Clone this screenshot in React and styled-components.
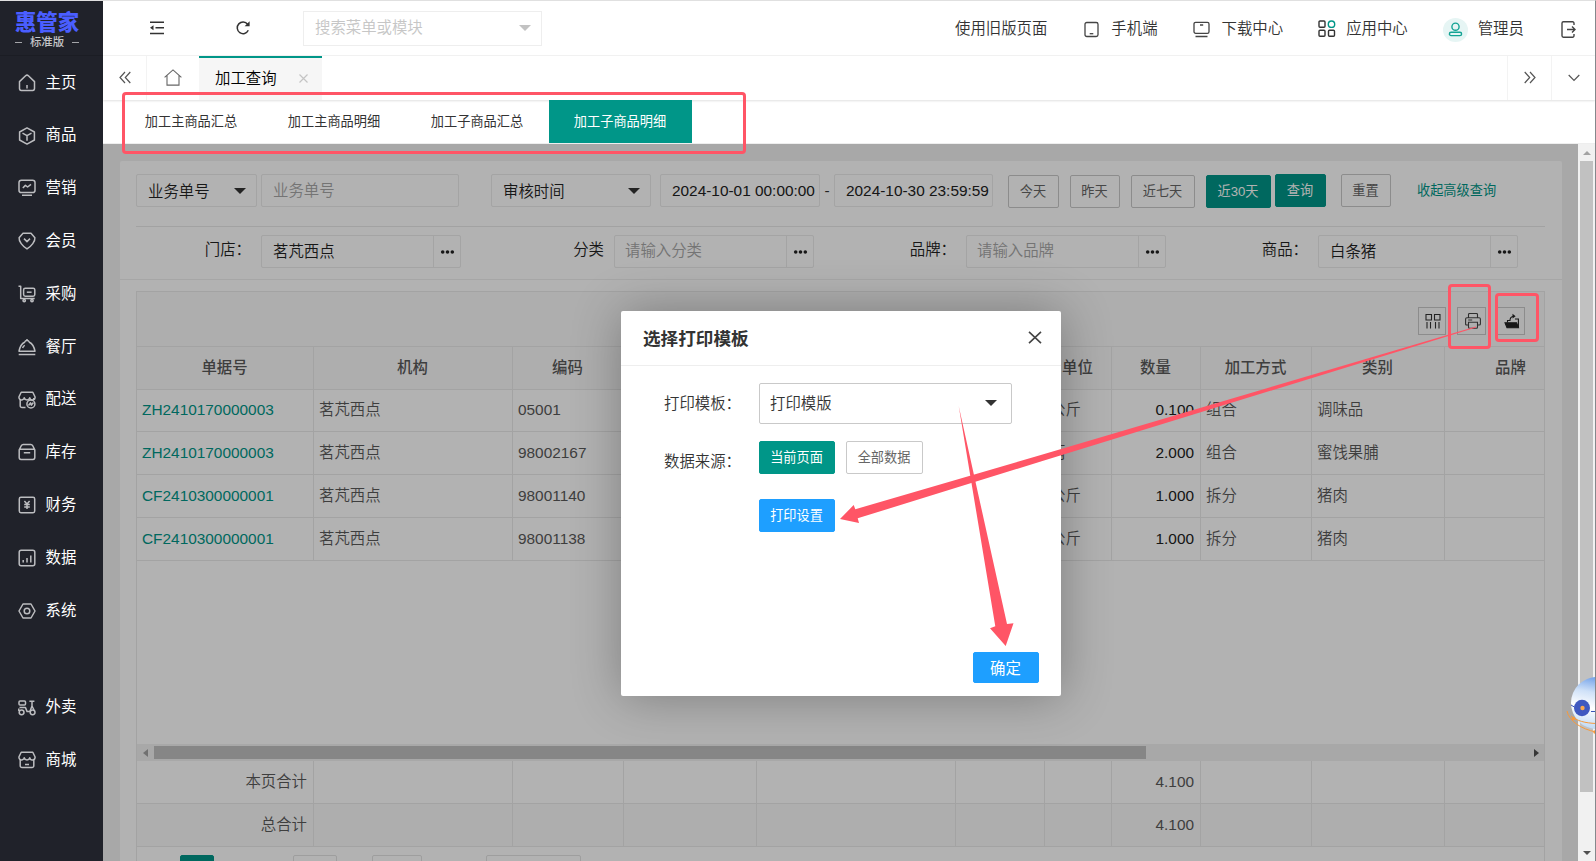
import React from 'react';
import styled, { createGlobalStyle } from 'styled-components';

const GlobalStyle = createGlobalStyle`
  * {
    box-sizing: border-box;
  }
  body {
    margin: 0;
    background: #fff;
    color: #333;
    font-family: "Liberation Sans", "Noto Sans CJK SC", sans-serif;
    font-size: 15.4px;
    font-weight: 350;
    line-height: 1.4;
  }
`;

const Window = styled.div`
  position: relative;
  display: flex;
  width: 1596px;
  height: 861px;
  overflow: hidden;
  border-top: 1px solid #e0e0e0;
  border-right: 1px solid #85888c;
`;

/* sidebar */
const Sidebar = styled.aside`
  width: 103px;
  flex: none;
  background: #20222a;
  color: #fff;
`;
const Logo = styled.div`
  height: 55px;
  padding: 10px 9px 0 0;
  display: flex;
  flex-direction: column;
  align-items: center;
  border-bottom: 1px solid #1b1d24;
`;
const LogoName = styled.div`
  color: #4a5eff;
  font-size: 21.4px;
  font-weight: 900;
  line-height: 24px;
`;
const LogoEdition = styled.div`
  display: flex;
  align-items: center;
  gap: 8px;
  color: #c4c5c8;
  font-size: 11.4px;
  font-weight: 500;
  line-height: 15px;
  &::before,
  &::after {
    content: '';
    width: 7px;
    height: 1px;
    background: #a4a5a9;
  }
`;
const SideItem = styled.div`
  display: flex;
  align-items: center;
  gap: 9.5px;
  height: 52.8px;
  padding-left: 18px;
  margin-top: ${(p) => (p.$apart ? '44px' : 0)};
  font-weight: 400;
  svg {
    flex: none;
    margin-top: 1px;
  }
`;

/* top bar */
const Main = styled.main`
  width: 1492px;
  flex: none;
  display: flex;
  flex-direction: column;
`;
const Header = styled.header`
  display: flex;
  align-items: center;
  height: 55px;
  border-bottom: 1px solid #f3f3f3;
  padding-left: 46px;
  svg {
    flex: none;
  }
`;
const HeaderIcon = styled.div`
  width: 86px;
  height: 20px;
  display: flex;
  align-items: center;
`;
const Search = styled.div`
  display: flex;
  align-items: center;
  justify-content: space-between;
  width: 239px;
  height: 35px;
  margin: 1px 0 0 -18px;
  padding: 0 10px 1px 11px;
  border: 1px solid #eee;
  color: #c6c6c6;
`;
const HeaderLink = styled.div`
  display: flex;
  align-items: center;
  gap: ${(p) => p.$gap || 0}px;
  margin-left: ${(p) => p.$left}px;
  padding-top: 2px;
  white-space: nowrap;
  svg {
    margin-top: -1px;
  }
`;
const Avatar = styled.div`
  display: flex;
  align-items: center;
  justify-content: center;
  width: 25px;
  height: 24px;
  margin-top: 1px;
  border-radius: 50%;
  background: #e6f5f4;
`;
const Caret = styled.i`
  flex: none;
  border: 6px solid transparent;
  border-top-color: ${(p) => p.$color || '#333'};
  border-bottom-width: 0;
`;

/* page tabs */
const TabBar = styled.div`
  display: flex;
  height: 44px;
  box-shadow: 0 1px 2px rgba(0, 0, 0, 0.12);
`;
const TabControl = styled.div`
  display: flex;
  align-items: center;
  justify-content: center;
  width: ${(p) => p.$width}px;
  padding-bottom: 1px;
  border-left: ${(p) => (p.$line ? '1px solid #f3f3f3' : 'none')};
  margin-left: ${(p) => (p.$end ? 'auto' : 0)};
`;
const PageTab = styled.div`
  display: flex;
  align-items: center;
  justify-content: space-between;
  width: 123px;
  padding: 0 14px 1px 16px;
  border-top: 2px solid #009688;
  background: #f6f6f6;
  color: #000;
`;

const SubTabs = styled.nav`
  display: flex;
  height: 44px;
  flex: none;
  padding-left: 17px;
  border-bottom: 1px solid #eee;
`;
const SubTab = styled.div`
  width: 143px;
  height: 43px;
  padding-right: 1px;
  line-height: 43px;
  text-align: center;
  font-size: 13.2px;
  font-weight: 400;
  color: ${(p) => (p.$active ? '#fff' : '#333')};
  background: ${(p) => (p.$active ? '#009688' : 'none')};
`;

/* content */
const Page = styled.div`
  position: relative;
  display: flex;
  height: 717px;
  flex: none;
  overflow: hidden;
  background: #f1f1f1;
`;
const Shade = styled.div`
  position: absolute;
  inset: 0 17px 0 0;
  background: rgba(0, 0, 0, 0.3);
`;
const Card = styled.section`
  width: 1442px;
  height: 760px;
  flex: none;
  margin: 17px 16px 0 17px;
  border-radius: 2px;
  background: #fff;
`;
const SearchRow = styled.div`
  display: flex;
  align-items: flex-start;
  height: 66px;
  margin: 0 17px 0 16px;
  padding-top: 13px;
  border-bottom: 1px solid #e8e8e8;
`;
const Field = styled.div`
  display: flex;
  align-items: center;
  justify-content: space-between;
  width: ${(p) => p.$width}px;
  height: 33px;
  margin-left: ${(p) => p.$left || 0}px;
  padding: ${(p) => (p.$select ? '2px 10px 0 11px' : '1px 0 0 11px')};
  border: 1px solid #ebebeb;
  border-radius: 2px;
  color: ${(p) => (p.$muted ? '#a6a6a6' : '#222')};
  white-space: nowrap;
  ${Caret} {
    margin-bottom: 2px;
  }
`;
const Dash = styled.span`
  width: 14px;
  line-height: 33px;
  text-align: center;
`;
const Button = styled.button`
  height: ${(p) => p.$height || 33}px;
  width: ${(p) => p.$width}px;
  margin: ${(p) => p.$top || 0}px 0 0 ${(p) => p.$left || 0}px;
  padding: 2px 1px 0 0;
  border: 1px solid ${(p) => p.$fill || '#c9c9c9'};
  border-radius: 2px;
  background: ${(p) => p.$fill || '#fff'};
  color: ${(p) => (p.$fill ? '#fff' : '#666')};
  font: inherit;
  font-size: ${(p) => p.$size || 13.2}px;
  font-weight: 400;
  white-space: nowrap;
`;
const FoldLink = styled.a`
  margin-left: 26px;
  line-height: 33px;
  font-size: 13.2px;
  font-weight: 400;
  color: #009688;
`;
const FilterRow = styled.div`
  display: grid;
  grid-template-columns: 125px 200px 153px 200px 152px 200px 152px 200px;
  height: 53px;
  padding: 8px 0 0 16px;
  border-bottom: 1px solid #eee;
`;
const FilterLabel = styled.div`
  padding-right: 10px;
  text-align: right;
  line-height: 30px;
  color: #222;
`;
const Picker = styled.div`
  display: flex;
  height: 33px;
  border: 1px solid #ebebeb;
  border-radius: 2px;
`;
const PickerValue = styled.div`
  width: 171px;
  padding-left: ${(p) => (p.$muted ? 10 : 11)}px;
  line-height: ${(p) => (p.$muted ? 30 : 32)}px;
  color: ${(p) => (p.$muted ? '#a6a6a6' : '#222')};
`;
const PickerMore = styled.div`
  flex: 1;
  display: flex;
  align-items: center;
  justify-content: center;
  padding-top: 1px;
  border-left: 1px solid #ebebeb;
`;

/* table */
const TableBox = styled.div`
  width: 1409px;
  height: 600px;
  margin: 11px 0 0 16px;
  border: 1px solid #eaeaea;
  overflow: hidden;
`;
const Tools = styled.div`
  display: flex;
  justify-content: flex-end;
  height: 55px;
  padding: 15px 19px 0 0;
  border-bottom: 1px solid #eaeaea;
  background: #fafafa;
`;
const Tool = styled.div`
  display: flex;
  align-items: center;
  justify-content: center;
  width: ${(p) => p.$width || 28}px;
  height: 28px;
  margin-left: 11px;
  padding: 0 0 1px 2px;
  border: 1px solid #c9c9c9;
`;
const Row = styled.div`
  display: grid;
  grid-template-columns: 177px 199px 111px 133px 199px 89px 67px 89px 111px 133px 133px;
  height: 43px;
  background: ${(p) => (p.$tinted ? '#fafafa' : '#fff')};
  color: #5a5a5a;
`;
const Cell = styled.div`
  padding: ${(p) => (p.$head ? '0 6px 1px 5px' : '0 6px 1px 5px')};
  border-right: 1px solid #eaeaea;
  border-bottom: 1px solid #eaeaea;
  display: flex;
  align-items: center;
  justify-content: ${(p) => p.$align || 'flex-start'};
  font-weight: ${(p) => (p.$head ? 500 : 'inherit')};
  color: ${(p) => p.$color || 'inherit'};
  white-space: nowrap;
`;
const TableBody = styled.div`
  height: 354px;
  ${Row}:first-child {
    height: 42px;
  }
`;
const HScroll = styled.div`
  display: flex;
  align-items: center;
  justify-content: space-between;
  height: 17px;
  padding: 0 5px 0 6px;
  background: #f1f1f1;
`;
const HThumb = styled.div`
  width: 992px;
  height: 13px;
  margin: 0 auto 0 6px;
  background: #c1c1c1;
`;
const SideArrow = styled.i`
  border: 4px solid transparent;
  border-${(p) => p.$to}-width: 0;
  border-${(p) => (p.$to === 'left' ? 'right' : 'left')}: 5px solid
    ${(p) => (p.$to === 'left' ? '#a3a3a3' : '#505050')};
`;
const Pager = styled.div`
  display: flex;
  padding: 8px 0 0 43px;
`;
const PagerBox = styled.div`
  width: ${(p) => p.$width}px;
  height: 30px;
  margin-right: ${(p) => p.$right || 0}px;
  border: 1px solid ${(p) => p.$fill || '#e2e2e2'};
  border-radius: 2px;
  background: ${(p) => p.$fill || '#fff'};
`;
const VScroll = styled.div`
  display: flex;
  flex-direction: column;
  align-items: center;
  width: 17px;
  flex: none;
  padding: 7px 0 6px;
  background: #f1f1f1;
`;
const VArrow = styled.i`
  border: 4px solid transparent;
  border-${(p) => p.$to}-width: 0;
  border-${(p) => (p.$to === 'top' ? 'bottom' : 'top')}: 4px solid
    ${(p) => (p.$to === 'top' ? '#a3a3a3' : '#505050')};
`;
const VThumb = styled.div`
  width: 13px;
  height: 631px;
  margin: 6px 0 auto;
  background: #c1c1c1;
`;

/* print dialog */
const Dialog = styled.div`
  position: absolute;
  left: 621px;
  top: 310px;
  width: 440px;
  height: 385px;
  display: flex;
  flex-direction: column;
  border-radius: 2px;
  background: #fff;
  box-shadow: 1px 1px 50px rgba(0, 0, 0, 0.3);
`;
const DialogTitle = styled.div`
  display: flex;
  align-items: center;
  justify-content: space-between;
  height: 55px;
  padding: 2px 19px 0 22px;
  border-bottom: 1px solid #eee;
  font-size: 17.6px;
  font-weight: 700;
  svg {
    margin-bottom: 4px;
  }
`;
const FormLine = styled.div`
  display: flex;
  align-items: flex-start;
  height: ${(p) => p.$height}px;
  margin-top: ${(p) => p.$top || 0}px;
  padding-left: 43px;
`;
const FormLabel = styled.div`
  width: 95px;
  line-height: 41px;
`;
const TemplateSelect = styled.div`
  display: flex;
  align-items: center;
  justify-content: space-between;
  width: 253px;
  height: 41px;
  padding: 1px 14px 0 10px;
  border: 1px solid #c9c9c9;
  border-radius: 2px;
  ${Caret} {
    margin-bottom: 2px;
  }
`;
const DialogFooter = styled.div`
  display: flex;
  justify-content: flex-end;
  margin-top: auto;
  padding: 0 22px 13px 0;
`;

/* notes drawn over the page */
const Mark = styled.div`
  position: absolute;
  left: ${(p) => p.$x}px;
  top: ${(p) => p.$y}px;
  width: ${(p) => p.$w}px;
  height: ${(p) => p.$h}px;
  border: 3px solid #ff5566;
  border-radius: 4px;
`;
const Overlay = styled.svg`
  position: absolute;
  left: 0;
  top: -1px;
  pointer-events: none;
`;

const sideIcons = {
  home: (
    <>
      <path d="M1.5 7.6 7.6 1.8a2 2 0 0 1 2.8 0l6.1 5.8v7a1.8 1.8 0 0 1-1.8 1.8H3.3a1.8 1.8 0 0 1-1.8-1.8z" />
      <path d="M9 11v3.5" />
    </>
  ),
  goods: (
    <>
      <path d="M9 .9 16.4 5v8L9 17.1 1.6 13V5z" />
      <path d="M4.5 6.2 9 8.7l4.5-2.5M9 8.7v5" />
    </>
  ),
  sale: (
    <>
      <rect x="1" y="1.2" width="16" height="12.4" rx="2.4" />
      <path d="m4.8 9 2.6-2.6L9.6 8l3.4-2.7M4 16.3h10" />
    </>
  ),
  member: (
    <>
      <path d="M5 1.3h8l3.9 4.4c.4 3.6-3.4 8.6-7.9 11.2C4.5 14.3.7 9.3 1.1 5.7z" />
      <path d="m6 6.6 3 3 3-3" />
    </>
  ),
  buy: (
    <>
      <path d="M.5 1.3h2.2v12.3h14" />
      <rect x="5.6" y="3.2" width="11.2" height="8" rx="1.6" />
      <path d="M8.8 7.2h4.8" />
      <circle cx="6.2" cy="15.6" r="1.2" />
      <circle cx="14" cy="15.6" r="1.2" />
    </>
  ),
  dining: (
    <>
      <path d="M.7 16.6h16.6M1 13.2h16c-.6-3-2-7.4-5.6-9a2.6 2.6 0 0 0-4.8 0C3 5.8 1.6 10.2 1 13.2z" />
      <path d="M4.6 10c.4-1.2 1.2-2.1 2.2-2.6M9 2.6V1" />
    </>
  ),
  delivery: (
    <>
      <path d="M7.5 16.6H4a1.8 1.8 0 0 1-1.8-1.8V8.5M15.8 8.7V7" />
      <path d="M3.2 1.2h11.6L17 5.8a2.6 2.6 0 0 1-5.2 1 2.9 2.9 0 0 1-5.6 0A2.6 2.6 0 0 1 1 5.8z" />
      <circle cx="12.9" cy="13" r="4" />
      <path d="m10.5 14.5 2-2.6.9 2.2 2-2.6" />
    </>
  ),
  stock: (
    <path d="M1.2 6.8 3.4 2.5a2 2 0 0 1 1.8-1.1h7.6a2 2 0 0 1 1.8 1.1l2.2 4.3v7.8a1.8 1.8 0 0 1-1.8 1.8H3a1.8 1.8 0 0 1-1.8-1.8zM1.2 6.2h15.6M5.8 9.8h6.4" />
  ),
  money: (
    <>
      <rect x="1.3" y="1.3" width="15.4" height="15.4" rx="1.6" />
      <path d="m6.4 5 2.6 3 2.6-3M9 8v5M6.2 8.6h5.6M6.2 10.9h5.6" />
    </>
  ),
  data: (
    <>
      <rect x="1.2" y="1.2" width="15.6" height="15.6" rx="2" />
      <path d="M5.2 13.5V11M9 13.5V9M12.8 13.5v-7" />
    </>
  ),
  system: (
    <>
      <path d="M5 2h8l4 7-4 7H5L1 9z" />
      <circle cx="9" cy="9" r="2.8" />
    </>
  ),
  takeout: (
    <>
      <rect x="1" y="2" width="6.5" height="4" rx="1" />
      <path d="M1.5 8.6h6l1.6 4h2.8L14 7V2.2h-2.6M14 2.2h2.4M14 7l2 4M.8 12V9.5" />
      <circle cx="3.6" cy="13.3" r="2.4" />
      <circle cx="14.6" cy="13.3" r="2.4" />
    </>
  ),
  mall: (
    <>
      <path d="M2.2 8.5v6.3A1.8 1.8 0 0 0 4 16.6h10a1.8 1.8 0 0 0 1.8-1.8V8.5M7 13.5h4" />
      <path d="M3.2 1.2h11.6L17 5.8a2.6 2.6 0 0 1-5.2 1 2.9 2.9 0 0 1-5.6 0A2.6 2.6 0 0 1 1 5.8z" />
    </>
  ),
};

const SideIcon = ({ name }) => (
  <svg width="18" height="18" fill="none" stroke="#bcbdc0" strokeWidth="1.5" strokeLinejoin="round">
    {sideIcons[name]}
  </svg>
);

const menu = [
  ['home', '主页'],
  ['goods', '商品'],
  ['sale', '营销'],
  ['member', '会员'],
  ['buy', '采购'],
  ['dining', '餐厅'],
  ['delivery', '配送'],
  ['stock', '库存'],
  ['money', '财务'],
  ['data', '数据'],
  ['system', '系统'],
  ['takeout', '外卖'],
  ['mall', '商城'],
];

const subTabs = ['加工主商品汇总', '加工主商品明细', '加工子商品汇总', '加工子商品明细'];

const filters = [
  { label: '门店：', value: '茗芃西点' },
  { label: '分类', hint: '请输入分类' },
  { label: '品牌：', hint: '请输入品牌' },
  { label: '商品：', value: '白条猪' },
];

const columns = ['单据号', '机构', '编码', '', '', '', '单位', '数量', '加工方式', '类别', '品牌'];

const records = [
  ['ZH2410170000003', '茗芃西点', '05001', '', '', '', '公斤', '0.100', '组合', '调味品', ''],
  ['ZH2410170000003', '茗芃西点', '98002167', '', '', '', '两', '2.000', '组合', '蜜饯果脯', ''],
  ['CF2410300000001', '茗芃西点', '98001140', '', '', '', '公斤', '1.000', '拆分', '猪肉', ''],
  ['CF2410300000001', '茗芃西点', '98001138', '', '', '', '公斤', '1.000', '拆分', '猪肉', ''],
];

const SideMenu = () => (
  <Sidebar>
    <Logo>
      <LogoName>惠管家</LogoName>
      <LogoEdition>标准版</LogoEdition>
    </Logo>
    {menu.map(([icon, text]) => (
      <SideItem key={icon} $apart={icon === 'takeout'}>
        <SideIcon name={icon} />
        {text}
      </SideItem>
    ))}
  </Sidebar>
);

const TopBar = () => (
  <Header>
    <HeaderIcon>
      <svg width="16" height="14" fill="none" stroke="#333" strokeWidth="1.4">
        <path d="M1 1.2h14M6.5 6.8H15M1 12.5h14" />
        <path d="M4.5 4.3v5L1 6.8z" fill="#333" stroke="none" />
      </svg>
    </HeaderIcon>
    <HeaderIcon>
      <svg width="16" height="16" fill="none" stroke="#333" strokeWidth="1.5">
        <path d="M13.3 10.3A5.8 5.8 0 1 1 12.6 4.2" />
        <path d="M14.6 1.2v5h-5z" fill="#333" stroke="none" />
      </svg>
    </HeaderIcon>
    <Search>
      搜索菜单或模块
      <Caret $color="#c2c2c2" />
    </Search>
    <HeaderLink $left={413}>使用旧版页面</HeaderLink>
    <HeaderLink $left={37} $gap={12}>
      <svg width="15" height="18" fill="none" stroke="#444" strokeWidth="1.3">
        <rect x="1" y="2.5" width="13" height="14" rx="1.8" />
        <path d="M5.7 13.7h3.6" />
      </svg>
      手机端
    </HeaderLink>
    <HeaderLink $left={35} $gap={12}>
      <svg width="17" height="18" fill="none" stroke="#444" strokeWidth="1.3">
        <rect x="1" y="2.3" width="15" height="11" rx="1.6" />
        <path d="M7 5h3.2M2.5 16.5h12" />
      </svg>
      下载中心
    </HeaderLink>
    <HeaderLink $left={35} $gap={10}>
      <svg width="18" height="19" fill="none" stroke="#333" strokeWidth="1.4">
        <rect x="1" y="2" width="6" height="6.3" rx="1" />
        <rect x="1" y="11.3" width="6" height="6" rx="1" />
        <rect x="10.5" y="11.3" width="6" height="6" rx="1" />
        <circle cx="13.5" cy="5.2" r="3.2" stroke="#009688" />
      </svg>
      应用中心
    </HeaderLink>
    <HeaderLink $left={35} $gap={10}>
      <Avatar>
        <svg width="15" height="15" fill="none" stroke="#13a394" strokeWidth="1.4">
          <circle cx="7.5" cy="4.7" r="3.6" />
          <rect x="1.4" y="10.2" width="12.2" height="3.4" rx="1.7" />
        </svg>
      </Avatar>
      管理员
    </HeaderLink>
    <HeaderLink $left={37}>
      <svg width="16" height="20" fill="none" stroke="#444" strokeWidth="1.4">
        <path d="M13 6V4.2a1.4 1.4 0 0 0-1.4-1.4H2.4A1.4 1.4 0 0 0 1 4.2v12.6a1.4 1.4 0 0 0 1.4 1.4h9.2a1.4 1.4 0 0 0 1.4-1.4V15" />
        <path d="M6 10.5h8M11 7.5l3 3-3 3" />
      </svg>
    </HeaderLink>
  </Header>
);

const PageTabs = () => (
  <TabBar>
    <TabControl $width={43}>
      <svg width="12" height="13" fill="none" stroke="#555" strokeWidth="1.2">
        <path d="M6 1 1 6.5 6 12M11.3 1l-5 5.5 5 5.5" />
      </svg>
    </TabControl>
    <TabControl $width={53} $line>
      <svg width="18" height="17" fill="none" stroke="#666" strokeWidth="1.1">
        <path d="M.6 8.3 9 .9l8.400 7.400M3 6.500v9.600h12V6.500" />
      </svg>
    </TabControl>
    <PageTab>
      加工查询
      <svg width="9" height="9" fill="none" stroke="#c4c4c4" strokeWidth="1.2">
        <path d="m.5.5 8 8M8.5.5l-8 8" />
      </svg>
    </PageTab>
    <TabControl $width={44} $line $end>
      <svg width="12" height="13" fill="none" stroke="#555" strokeWidth="1.2">
        <path d="m.7 1 5 5.5-5 5.5M6 1l5 5.5L6 12" />
      </svg>
    </TabControl>
    <TabControl $width={44} $line>
      <svg width="12" height="8" fill="none" stroke="#555" strokeWidth="1.2">
        <path d="m.7 1 5.3 5.5L11.3 1" />
      </svg>
    </TabControl>
  </TabBar>
);

const Filters = () => (
  <>
    <SearchRow>
      <Field $width={121} $select>
        业务单号
        <Caret />
      </Field>
      <Field $width={198} $left={4} $muted>
        业务单号
      </Field>
      <Field $width={160} $left={32} $select>
        审核时间
        <Caret />
      </Field>
      <Field $width={160} $left={9}>
        2024-10-01 00:00:00
      </Field>
      <Dash>-</Dash>
      <Field $width={159}>2024-10-30 23:59:59</Field>
      <Button $width={51} $left={15} $top={1}>今天</Button>
      <Button $width={50} $left={11} $top={1}>昨天</Button>
      <Button $width={64} $left={11} $top={1}>近七天</Button>
      <Button $width={65} $left={11} $top={1} $fill="#009688">近30天</Button>
      <Button $width={51} $left={4} $fill="#009688">查询</Button>
      <Button $width={50} $left={15}>重置</Button>
      <FoldLink>收起高级查询</FoldLink>
    </SearchRow>
    <FilterRow>
      {filters.map(({ label, value, hint }) => (
        <React.Fragment key={label}>
          <FilterLabel>{label}</FilterLabel>
          <Picker>
            <PickerValue $muted={!value}>{value || hint}</PickerValue>
            <PickerMore>
              <svg width="15" height="4" fill="#222">
                <circle cx="2.7" cy="2" r="1.8" />
                <circle cx="7.5" cy="2" r="1.8" />
                <circle cx="12.3" cy="2" r="1.8" />
              </svg>
            </PickerMore>
          </Picker>
        </React.Fragment>
      ))}
    </FilterRow>
  </>
);

const cellStyle = (index) => {
  if (index === 0) return { $color: '#009688' };
  if (index === 7) return { $color: '#222', $align: 'flex-end' };
  return {};
};

const TotalRow = ({ label, tinted }) => (
  <Row $tinted={tinted}>
    {columns.map((_, i) => (
      <Cell key={i} $align="flex-end">
        {i === 0 && label}
        {i === 7 && '4.100'}
      </Cell>
    ))}
  </Row>
);

const Table = () => (
  <TableBox>
    <Tools>
      <Tool>
        <svg width="16" height="16" fill="none" stroke="#333" strokeWidth="1.1">
          <path d="M1 1.5h5.5V7H1zM9.5 1.5H15V7H9.5zM2 9v6.5M5.5 9v6.5M10.5 9v6.5M14 9v6.5" />
        </svg>
      </Tool>
      <Tool $width={29}>
        <svg width="16" height="16" fill="none" stroke="#444" strokeWidth="1.1">
          <path d="M3.5 4.5v-3q0-1 1-1h7q1 0 1 1v3M3.5 12H1.7Q.6 12 .6 11V6q0-1.300 1.300-1.300h12.200q1.300 0 1.300 1.300v5q0 1-1.100 1h-1.800" />
          <path d="M3.5 9.2h9v4.700q0 1.300-1 1.300h-7q-1 0-1-1.300zM3.200 7h4" />
        </svg>
      </Tool>
      <Tool>
        <svg width="16" height="16" fill="none" stroke="#222" strokeWidth="1.1">
          <path d="M1 9.8h11.6l1.9 5H3z" fill="#222" />
          <path d="M3.5 9.5v-2h2M11 6h3.4v8M6 8q-.3-4.5 4-4.8" />
          <path d="M8.5.8l3.100 2.400-3.100 2.400z" fill="#222" stroke="none" />
        </svg>
      </Tool>
    </Tools>
    <Row $tinted>
      {columns.map((name, i) => (
        <Cell key={i} $head $align="center">
          {name}
        </Cell>
      ))}
    </Row>
    <TableBody>
      {records.map((record, r) => (
        <Row key={r}>
          {record.map((text, i) => (
            <Cell key={i} {...cellStyle(i)}>
              {text}
            </Cell>
          ))}
        </Row>
      ))}
    </TableBody>
    <HScroll>
      <SideArrow $to="left" />
      <HThumb />
      <SideArrow $to="right" />
    </HScroll>
    <TotalRow label="本页合计" />
    <TotalRow label="总合计" tinted />
    <Pager>
      <PagerBox $width={34} $right={79} $fill="#009688" />
      <PagerBox $width={44} $right={35} />
      <PagerBox $width={50} $right={64} />
      <PagerBox $width={95} />
    </Pager>
  </TableBox>
);

const PrintDialog = () => (
  <Dialog>
    <DialogTitle>
      选择打印模板
      <svg width="14" height="13" fill="none" stroke="#444" strokeWidth="1.6">
        <path d="m1 .8 12 11.4M13 .8 1 12.2" />
      </svg>
    </DialogTitle>
    <FormLine $height={58} $top={17}>
      <FormLabel>打印模板：</FormLabel>
      <TemplateSelect>
        打印模版
        <Caret />
      </TemplateSelect>
    </FormLine>
    <FormLine $height={58}>
      <FormLabel>数据来源：</FormLabel>
      <Button $width={76} $fill="#009688">当前页面</Button>
      <Button $width={77} $left={11}>全部数据</Button>
    </FormLine>
    <FormLine $height={40}>
      <FormLabel />
      <Button $width={76} $fill="#1e9fff">打印设置</Button>
    </FormLine>
    <DialogFooter>
      <Button $width={66} $height={31} $size={15.4} $fill="#1e9fff">确定</Button>
    </DialogFooter>
  </Dialog>
);

const Notes = () => (
  <>
    <Mark $x={122} $y={91} $w={624} $h={62} />
    <Mark $x={1448} $y={283} $w={43} $h={65} />
    <Mark $x={1495} $y={292} $w={44} $h={49} />
    <Overlay width="1596" height="861">
      <defs>
        <linearGradient id="ball" x1="0.5" y1="0" x2="0.3" y2="1">
          <stop offset="0" stopColor="#6f9fe8" />
          <stop offset="0.3" stopColor="#cfe1f8" />
          <stop offset="0.6" stopColor="#fff" />
          <stop offset="1" stopColor="#bcd8f5" />
        </linearGradient>
      </defs>
      <path
        fill="#ff5566"
        d="M840 519 853.7 505 855.3 509.3 1040 455.3 1476 326.5 1476 327.5 1040 461.7 857.7 518.3 859 523z"
      />
      <path fill="#ff5566" d="M958.7 406 1007 624 1013.5 623.3 1005.7 646 990 628.3 995.3 626.3z" />
      <circle cx="1597" cy="703" r="26" fill="url(#ball)" />
      <path d="M1567 711c2 10 14 18 29 21M1571 716c6 5 14 7 25 7.5" fill="none" stroke="#f79a3c" strokeWidth="1" />
      <path d="m1571 705 5 3M1591 711.5h5" stroke="#3a55b8" />
      <ellipse cx="1582" cy="708" rx="8" ry="8.2" fill="#3f58c0" />
      <circle cx="1582.5" cy="708" r="2.2" fill="#f9a650" />
      <circle cx="1573.5" cy="718.5" r="1.8" fill="#f79a3c" />
      <circle cx="1595" cy="732" r="1.8" fill="#f79a3c" />
    </Overlay>
  </>
);

const App = () => {
  return (
    <>
      <GlobalStyle />
      <Window>
        <SideMenu />
        <Main>
          <TopBar />
          <PageTabs />
          <SubTabs>
            {subTabs.map((text, i) => (
              <SubTab key={text} $active={i === 3}>
                {text}
              </SubTab>
            ))}
          </SubTabs>
          <Page>
            <Card>
              <Filters />
              <Table />
            </Card>
            <VScroll>
              <VArrow $to="top" />
              <VThumb />
              <VArrow $to="bottom" />
            </VScroll>
            <Shade />
          </Page>
        </Main>
        <PrintDialog />
        <Notes />
      </Window>
    </>
  );
};

export default App;
